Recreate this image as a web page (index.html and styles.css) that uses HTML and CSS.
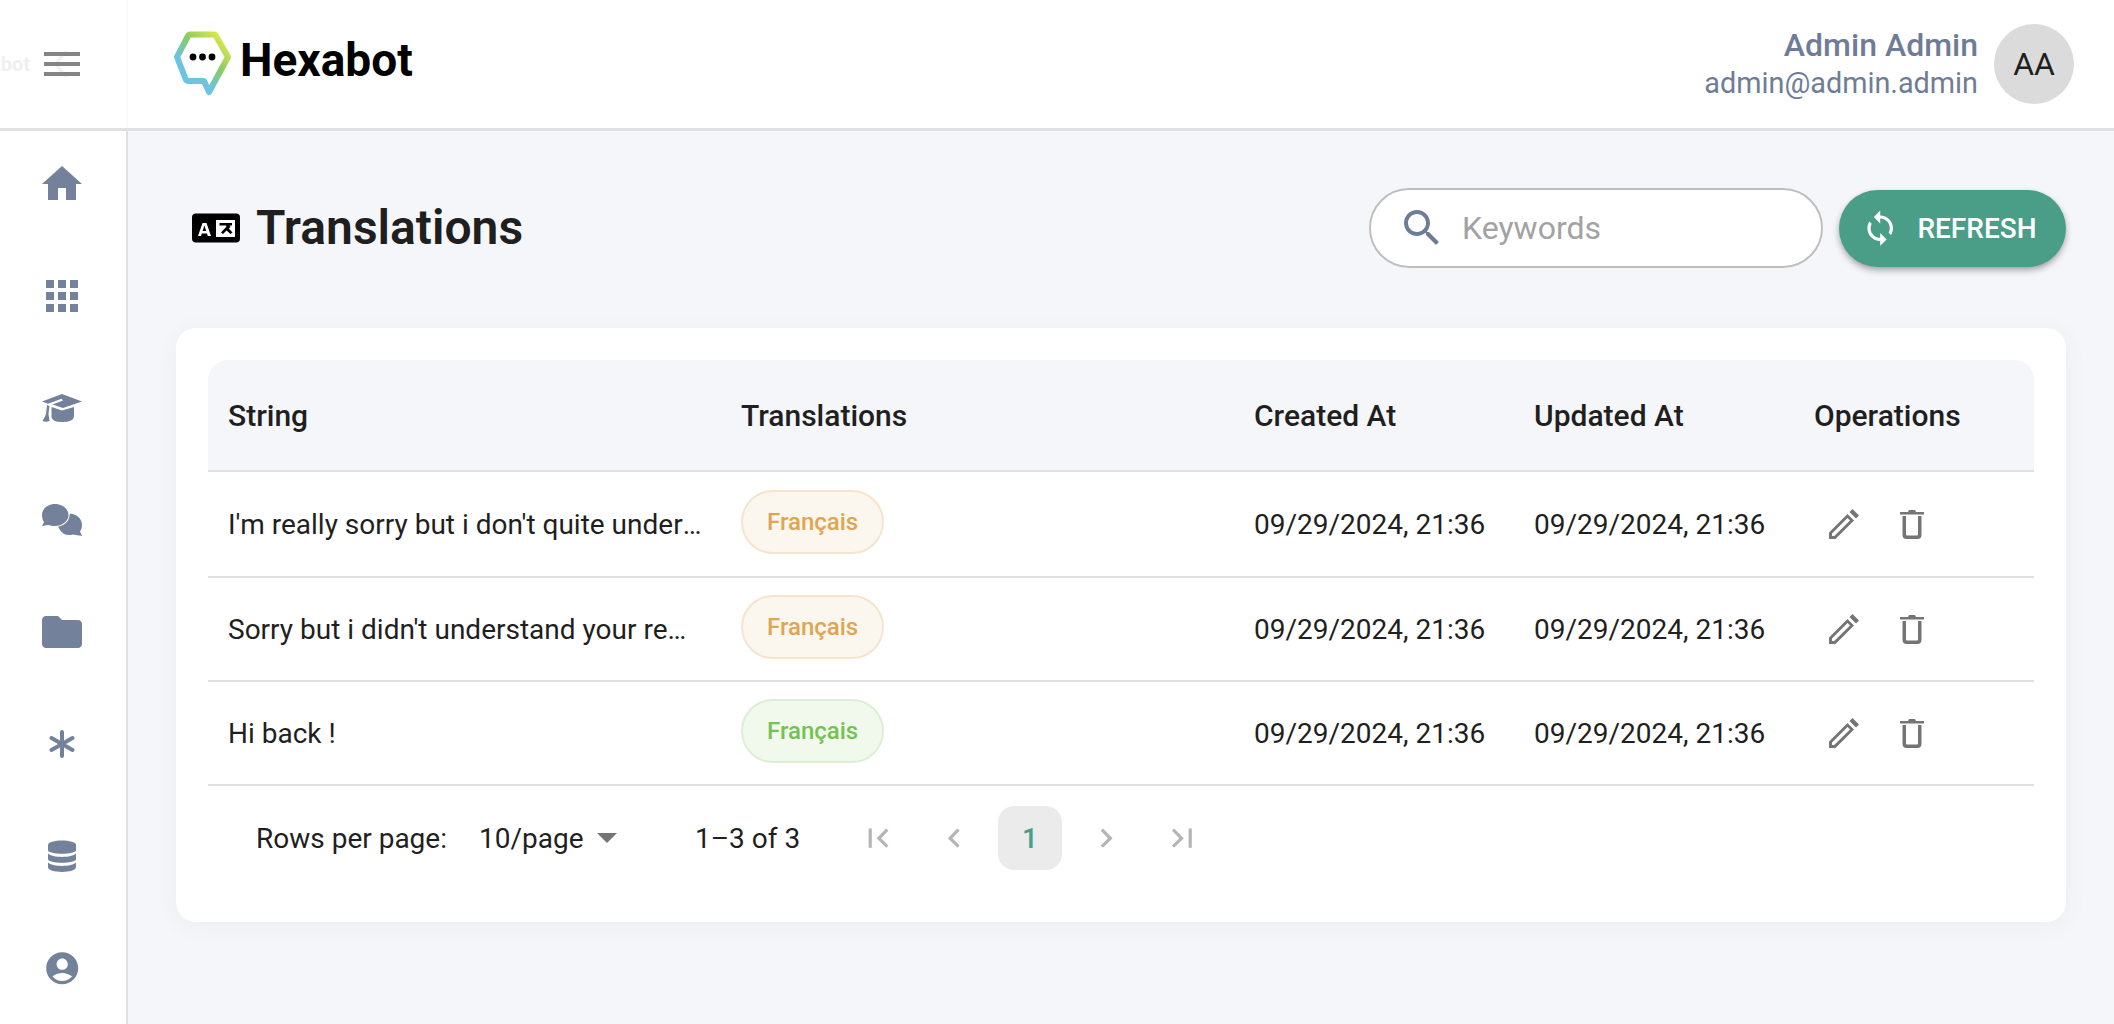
FILE: index.html
```html
<!DOCTYPE html>
<html lang="en">
<head>
<meta charset="utf-8">
<title>Hexabot - Translations</title>
<link rel="stylesheet" href="styles.css">
</head>
<body>
<header class="topbar">
  <div class="topbar-left">
    <span class="ghost-brand">Hexabot</span>
    <span class="menu-btn">
      <svg width="48" height="48" viewBox="0 0 24 24"><path class="ghost-chevron" d="M15 5.500 10 12l5 6.500h-2L8 12l5-6.500z"/><path class="menu-bars" d="M3 18h18v-2H3v2zm0-5h18v-2H3v2zm0-7v2h18V6H3z"/></svg>
    </span>
  </div>
  <div class="brand">
    <svg class="brand-mark" width="60" height="66" viewBox="0 0 60 66">
      <defs><linearGradient id="hexgrad" gradientUnits="userSpaceOnUse" x1="6" y1="54" x2="50" y2="8"><stop offset="0" stop-color="#6cc4e8"/><stop offset=".3" stop-color="#6cc4e0"/><stop offset=".62" stop-color="#86cb66"/><stop offset="1" stop-color="#dbe84a"/></linearGradient></defs>
      <path d="M4 26 15 5C15.500 4 16 3.500 17 3.500H41C42 3.500 42.500 4 43 5L55 26 36 61 31 50H15C14 50 13.500 49.500 13 49Z" fill="none" stroke="url(#hexgrad)" stroke-width="6" stroke-linejoin="round"/>
      <circle cx="20" cy="26" r="3.400"/><circle cx="29.500" cy="26" r="3.400"/><circle cx="39" cy="26" r="3.400"/>
    </svg>
    <span class="brand-name">Hexabot</span>
  </div>
  <div class="user">
    <div class="user-text">
      <div class="user-name">Admin Admin</div>
      <div class="user-mail">admin@admin.admin</div>
    </div>
    <div class="avatar">AA</div>
  </div>
</header>
<div class="shell">
  <nav class="sidebar">
    <span class="nav-item"><svg width="48" height="48" viewBox="0 0 24 24"><path d="M10 20v-6h4v6h5v-8h3L12 3 2 12h3v8z"/></svg></span>
    <span class="nav-item"><svg width="48" height="48" viewBox="0 0 24 24"><path d="M4 8h4V4H4v4zm6 12h4v-4h-4v4zm-6 0h4v-4H4v4zm0-6h4v-4H4v4zm6 0h4v-4h-4v4zm6-10v4h4V4h-4zm-6 4h4V4h-4v4zm6 6h4v-4h-4v4zm0 6h4v-4h-4v4z"/></svg></span>
    <span class="nav-item"><svg width="40" height="28" viewBox="0 0 40 28"><path d="M20 0 40 7.500 21 14 10.500 10.500 21 6.500 19.500 4.800 6 9.800 0 7.500Z"/><path d="M5 11 7.500 12 6.500 20 7.500 27Q4 28.500 0.500 27 3 23 4 20Z"/><path d="M9.500 13 20 16.500 32 13V22Q32 28 20 28 10 28 9.500 23Z"/></svg></span>
    <span class="nav-item"><svg width="40" height="32" viewBox="0 0 40 32"><path d="M15 19C20 18 27 14 28 9.500 35 10 40 15 40 21 40 24 39 26 38 27.500L40 32 31 30.500C22 33 17 27 15 19Z"/><path class="nav-ring" d="M13 0C20.500 0 26.500 5 26.500 11S20.500 22 13 22C10 22 8 21.500 6 21L0 22 2 18C0.700 16 0 14 0 11 0 5 5.500 0 13 0Z"/></svg></span>
    <span class="nav-item"><svg width="48" height="48" viewBox="0 0 24 24"><path d="M10 4H4c-1.100 0-1.990.9-1.990 2L2 18c0 1.100.9 2 2 2h16c1.100 0 2-.9 2-2V8c0-1.100-.9-2-2-2h-8l-2-2z"/></svg></span>
    <span class="nav-item"><svg width="26" height="28" viewBox="0 0 26 28"><path class="nav-star" d="M13 2V26M2.500 8 23.500 20M2.500 20 23.500 8"/></svg></span>
    <span class="nav-item"><svg width="28" height="32" viewBox="0 0 28 32"><path d="M0 5C0-1 28-1 28 5V10C28 15 0 15 0 10Z"/><path d="M0 13.500C4 18 24 18 28 13.500V19C28 24 0 24 0 19Z"/><path d="M0 22.500C4 27 24 27 28 22.500V27C28 33.500 0 33.500 0 27Z"/></svg></span>
    <span class="nav-item"><svg width="38.400" height="38.400" viewBox="0 0 24 24"><path d="M12 2C6.480 2 2 6.480 2 12s4.480 10 10 10 10-4.480 10-10S17.520 2 12 2zm0 4c1.930 0 3.500 1.570 3.500 3.500S13.930 13 12 13s-3.500-1.570-3.500-3.500S10.070 6 12 6zm0 14c-2.030 0-4.430-.82-6.140-2.880C7.550 15.800 9.680 15 12 15s4.450.8 6.140 2.120C16.430 19.180 14.030 20 12 20z"/></svg></span>
  </nav>
  <main class="content">
    <div class="page-head">
      <div class="page-title">
        <svg width="48" height="30" viewBox="0 0 48 30"><rect width="48" height="29" y=".5" rx="4"/><rect x="24" y="7" width="19" height="17" fill="#fff"/><path fill="#fff" d="M6 23 10.500 10H14.500L19 23H15.800L15 20.500H9.800L9 23ZM10.600 18H14.200L12.400 12.500Z"/><path d="M27.500 10H40V12.500H37.500L38.500 14 36.800 15.500 40.500 19.500 38.500 21 34.500 17.500 31 21 29 19.500 34.500 13.500 34 12.500H27.500Z"/></svg>
        <h1>Translations</h1>
      </div>
      <div class="page-actions">
        <label class="search">
          <svg width="48" height="48" viewBox="0 0 24 24"><path d="M15.500 14h-.79l-.28-.27C15.410 12.590 16 11.110 16 9.500 16 5.910 13.090 3 9.500 3S3 5.910 3 9.500 5.910 16 9.500 16c1.610 0 3.090-.59 4.230-1.570l.27.28v.79l5 4.990L20.490 19l-4.990-5zm-6 0C7.010 14 5 11.990 5 9.500S7.010 5 9.500 5 14 7.010 14 9.500 11.990 14 9.500 14z"/></svg>
          <input class="search-input" type="text" placeholder="Keywords">
        </label>
        <button class="refresh" type="button">
          <svg width="38.400" height="38.400" viewBox="0 0 24 24"><path d="M12 4V1L8 5l4 4V6c3.310 0 6 2.690 6 6 0 1.010-.25 1.970-.7 2.800l1.460 1.460C19.540 15.030 20 13.570 20 12c0-4.420-3.580-8-8-8zm0 14c-3.310 0-6-2.690-6-6 0-1.010.25-1.970.7-2.800L5.240 7.740C4.460 8.970 4 10.430 4 12c0 4.420 3.580 8 8 8v3l4-4-4-4v3z"/></svg>
          <span>REFRESH</span>
        </button>
      </div>
    </div>
    <section class="card">
      <table class="grid">
        <colgroup><col class="col-wide"><col class="col-wide"><col class="col-date"><col class="col-date"><col></colgroup>
        <thead>
          <tr><th>String</th><th>Translations</th><th>Created At</th><th>Updated At</th><th>Operations</th></tr>
        </thead>
        <tbody>
          <tr class="row-first">
            <td><div class="ellipsis">I'm really sorry but i don't quite understand what you are saying</div></td>
            <td><span class="chip chip-warn">Français</span></td>
            <td>09/29/2024, 21:36</td>
            <td>09/29/2024, 21:36</td>
            <td><div class="ops"><svg width="30" height="30" viewBox="0 0 30 30"><path fill-rule="evenodd" d="M0 30V23.500L18.500 5 25 11.500 6.500 30ZM3 27H5.300L21 11.500 18.500 9 3 24.500Z"/><path d="M20.500 3 23.500 0 30 6.500 27 9.500Z"/></svg><svg width="24" height="30" viewBox="0 0 24 30"><path d="M0 3H8L9 1H15L16 3H24V5.500H0Z"/><path d="M2.500 7H21.500V26C21.500 28.500 20 30 17.500 30H6.500C4 30 2.500 28.500 2.500 26ZM6 7V25.500C6 26 6.500 26.500 7.500 26.500H16.500C17.500 26.500 18 26 18 25.500V7Z" fill-rule="evenodd"/></svg></div></td>
          </tr>
          <tr>
            <td><div class="ellipsis">Sorry but i didn't understand your request, please try again</div></td>
            <td><span class="chip chip-warn">Français</span></td>
            <td>09/29/2024, 21:36</td>
            <td>09/29/2024, 21:36</td>
            <td><div class="ops"><svg width="30" height="30" viewBox="0 0 30 30"><path fill-rule="evenodd" d="M0 30V23.500L18.500 5 25 11.500 6.500 30ZM3 27H5.300L21 11.500 18.500 9 3 24.500Z"/><path d="M20.500 3 23.500 0 30 6.500 27 9.500Z"/></svg><svg width="24" height="30" viewBox="0 0 24 30"><path d="M0 3H8L9 1H15L16 3H24V5.500H0Z"/><path d="M2.500 7H21.500V26C21.500 28.500 20 30 17.500 30H6.500C4 30 2.500 28.500 2.500 26ZM6 7V25.500C6 26 6.500 26.500 7.500 26.500H16.500C17.500 26.500 18 26 18 25.500V7Z" fill-rule="evenodd"/></svg></div></td>
          </tr>
          <tr>
            <td><div class="ellipsis">Hi back !</div></td>
            <td><span class="chip chip-ok">Français</span></td>
            <td>09/29/2024, 21:36</td>
            <td>09/29/2024, 21:36</td>
            <td><div class="ops"><svg width="30" height="30" viewBox="0 0 30 30"><path fill-rule="evenodd" d="M0 30V23.500L18.500 5 25 11.500 6.500 30ZM3 27H5.300L21 11.500 18.500 9 3 24.500Z"/><path d="M20.500 3 23.500 0 30 6.500 27 9.500Z"/></svg><svg width="24" height="30" viewBox="0 0 24 30"><path d="M0 3H8L9 1H15L16 3H24V5.500H0Z"/><path d="M2.500 7H21.500V26C21.500 28.500 20 30 17.500 30H6.500C4 30 2.500 28.500 2.500 26ZM6 7V25.500C6 26 6.500 26.500 7.500 26.500H16.500C17.500 26.500 18 26 18 25.500V7Z" fill-rule="evenodd"/></svg></div></td>
          </tr>
        </tbody>
      </table>
      <div class="pager">
        <span class="pager-label">Rows per page:</span>
        <span class="pager-select">10/page<svg width="20" height="10" viewBox="0 0 20 10"><path d="M0 0H20L10 10Z"/></svg></span>
        <span class="pager-range">1–3 of 3</span>
        <div class="pager-buttons">
          <span class="page-btn"><svg width="38.400" height="38.400" viewBox="0 0 24 24"><path d="M18.410 16.590 13.820 12l4.590-4.590L17 6l-6 6 6 6zM6 6h2v12H6z"/></svg></span>
          <span class="page-btn"><svg width="38.400" height="38.400" viewBox="0 0 24 24"><path d="M15.410 7.410 14 6l-6 6 6 6 1.410-1.410L10.830 12z"/></svg></span>
          <span class="page-btn page-current">1</span>
          <span class="page-btn"><svg width="38.400" height="38.400" viewBox="0 0 24 24"><path d="M10 6 8.590 7.410 13.170 12l-4.580 4.590L10 18l6-6z"/></svg></span>
          <span class="page-btn"><svg width="38.400" height="38.400" viewBox="0 0 24 24"><path d="M5.590 7.410 10.180 12l-4.590 4.590L7 18l6-6-6-6zM16 6h2v12h-2z"/></svg></span>
        </div>
      </div>
    </section>
  </main>
</div>
</body>
</html>
```
FILE: styles.css
```css
* { box-sizing: border-box; }
html, body { margin: 0; height: 100%; }
body {
  font-family: Roboto, "Noto Sans", sans-serif;
  color: #1f1f1f;
  background: #f5f6fa;
  overflow: hidden;
  display: flex;
  flex-direction: column;
}

.topbar {
  flex: none;
  height: 131px;
  display: flex;
  align-items: center;
  background: #fff;
  border-bottom: 3px solid #e0e0e0;
}
.topbar-left {
  flex: none;
  width: 128px;
  height: 128px;
  display: flex;
  align-items: center;
  justify-content: flex-end;
  overflow: hidden;
  border-right: 2px solid #fafafa;
}
.ghost-brand {
  flex: none;
  font-size: 20px;
  font-weight: 700;
  color: #efefef;
  margin-right: 8px;
}
.menu-btn { flex: none; width: 48px; height: 48px; margin-right: 40px; }
.menu-btn svg { display: block; }
.menu-bars { fill: #848484; }
.ghost-chevron { fill: #f0f0f0; }

.brand { display: flex; align-items: center; margin-left: 45px; }
.brand-mark { display: block; margin-right: 7px; }
.brand-name { font-size: 46px; font-weight: 700; color: #000; line-height: 1; margin-bottom: 8px; }

.user { margin-left: auto; margin-right: 40px; display: flex; align-items: center; gap: 16px; }
.user-text { text-align: right; }
.user-name { font-size: 32px; font-weight: 500; color: #6f7c98; line-height: 38px; }
.user-mail { font-size: 28.8px; color: #6f7c98; line-height: 38px; }
.avatar {
  width: 80px;
  height: 80px;
  border-radius: 50%;
  background: #dbdbdb;
  display: flex;
  align-items: center;
  justify-content: center;
  font-size: 32px;
  color: #1f1f1f;
}

.shell { flex: 1; min-height: 0; display: flex; }
.sidebar {
  flex: none;
  width: 128px;
  background: #fff;
  border-right: 2px solid #e0e0e0;
  display: flex;
  flex-direction: column;
  align-items: center;
  gap: 64px;
  padding: 29px 2px 0 0;
}
.nav-item { flex: none; width: 48px; height: 48px; display: flex; align-items: center; justify-content: center; }
.nav-item svg { fill: #74819b; display: block; }
.nav-ring { stroke: #fff; stroke-width: 2; paint-order: stroke; }
.nav-star { fill: none; stroke: #74819b; stroke-width: 4; stroke-linecap: round; }

.content { flex: 1; min-width: 0; padding: 57px 48px 0; }
.page-head { display: flex; align-items: center; justify-content: space-between; height: 80px; padding-left: 16px; }
.page-title { display: flex; align-items: center; gap: 16px; }
.page-title svg { display: block; }
.page-title h1 { margin: 0; font-size: 48px; font-weight: 600; color: #1f1f1f; line-height: 1; }
.page-actions { display: flex; align-items: center; gap: 16px; }

.search {
  width: 454px;
  height: 80px;
  display: flex;
  align-items: center;
  gap: 14px;
  background: #fff;
  border: 2px solid #bfbfbf;
  border-radius: 40px;
  padding-left: 27px;
}
.search svg { flex: none; fill: #6f7c98; }
.search-input {
  flex: 1;
  min-width: 0;
  border: 0;
  outline: 0;
  background: transparent;
  font: 400 32px Roboto, sans-serif;
  color: #1f1f1f;
}
.search-input::placeholder { color: #a2a2a2; opacity: 1; }

.refresh {
  width: 227px;
  height: 77px;
  margin-top: 1px;
  display: flex;
  align-items: center;
  gap: 18px;
  padding: 0 0 0 22px;
  border: 0;
  border-radius: 40px;
  background: #4a9e88;
  color: #fff;
  font: 500 28px Roboto, sans-serif;
  box-shadow: 0 3px 6px -1px rgba(0,0,0,.3), 0 4px 8px rgba(0,0,0,.12);
}
.refresh svg { fill: #fff; flex: none; }

.card {
  margin-top: 60px;
  height: 594px;
  background: #fff;
  border-radius: 20px;
  padding: 32px 32px 0;
  box-shadow: 0 4px 24px rgba(60,70,100,.05);
}
.grid { width: 100%; border-collapse: separate; border-spacing: 0; table-layout: fixed; }
.col-wide { width: 513px; }
.col-date { width: 280px; }
.grid th {
  height: 112px;
  padding: 0 20px;
  background: #f5f6fa;
  font-size: 30px;
  font-weight: 500;
  text-align: left;
  color: #1f1f1f;
  border-bottom: 2px solid #e0e0e0;
  white-space: nowrap;
}
.grid th:first-child { border-top-left-radius: 20px; }
.grid th:last-child { border-top-right-radius: 20px; }
.grid td {
  height: 104px;
  padding: 0 19px 0 20px;
  font-size: 28px;
  color: #1f1f1f;
  border-bottom: 2px solid #e0e0e0;
}
.row-first td { height: 106px; }
.ellipsis { overflow: hidden; white-space: nowrap; text-overflow: ellipsis; }
.chip {
  display: inline-flex;
  align-items: center;
  height: 64px;
  padding: 0 24px;
  border-radius: 32px;
  font-size: 24px;
  font-weight: 500;
  margin-bottom: 5px;
  vertical-align: middle;
  border: 2px solid;
}
.chip-warn { color: #dfa553; background: #fbf6ee; border-color: #f6e5cd; }
.chip-ok { color: #75c254; background: #f1f9ed; border-color: #dcefd3; }
.ops { display: flex; align-items: center; gap: 41px; padding-left: 15px; }
.ops svg { display: block; fill: #757575; flex: none; }

.pager { display: flex; align-items: center; margin-top: 20px; padding-left: 48px; height: 64px; font-size: 28px; color: #1f1f1f; }
.pager-label { width: 223px; }
.pager-select { width: 216px; display: flex; align-items: center; gap: 13px; }
.pager-select svg { fill: #757575; display: block; }
.pager-range { width: 151px; }
.pager-buttons { display: flex; gap: 12px; }
.page-btn { width: 64px; height: 64px; border-radius: 16px; display: flex; align-items: center; justify-content: center; }
.page-btn svg { fill: #b5b5b5; display: block; }
.page-current { background: #ebebeb; color: #4a9e88; font-weight: 500; }
```
